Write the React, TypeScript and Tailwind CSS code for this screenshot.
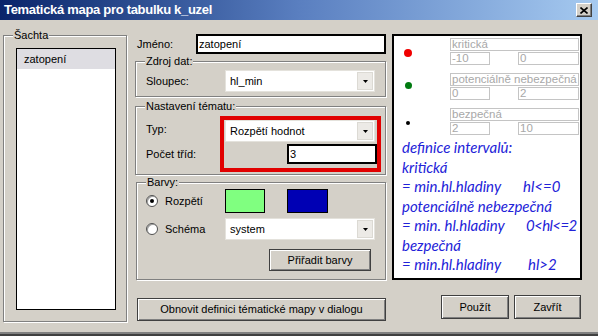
import React from "react";

const Legend = ({ children }: { children: React.ReactNode }) => (
  <span className="absolute left-[9px] top-[-7px] px-[1px] bg-[#d4d0c8] leading-[13px] whitespace-nowrap">
    {children}
  </span>
);

const Arrow = () => (
  <div className="flex h-[18px] w-[16px] mr-[1px] items-center justify-center bg-[#eceae6] border border-[#dcdad4]">
    <svg width="5" height="3" viewBox="0 0 5 3">
      <path d="M0 0h5L2.5 3z" fill="#000" />
    </svg>
  </div>
);

const Combo = ({ value }: { value: string }) => (
  <div className="flex h-[22px] w-[150px] items-center bg-white border border-[#e4e2dc]">
    <span className="flex-1 pl-[4px] leading-[13px]">{value}</span>
    <Arrow />
  </div>
);

const Radio = ({ checked }: { checked?: boolean }) => (
  <div className="flex h-[12px] w-[12px] items-center justify-center rounded-full bg-white border border-[#505050] shadow-[inset_1px_1px_0_#a0a0a0]">
    {checked && <div className="h-[4px] w-[4px] rounded-full bg-black" />}
  </div>
);

const btn =
  "flex items-center justify-center border border-[#404040] bg-[#d4d0c8] shadow-[inset_1px_1px_0_#fff,inset_-1px_-1px_0_#808080] leading-[13px]";

const group = "relative border border-[#808080] shadow-[inset_1px_1px_0_#fff,1px_1px_0_#fff]";

const DisBox = ({ text, w }: { text: string; w: string }) => (
  <div className={"h-[13px] border border-[#c4c4c4] bg-white pl-[1px] text-[#a8a8a8] text-[11.5px] leading-[11px] overflow-hidden whitespace-nowrap " + w}>
    {text}
  </div>
);

const Interval = ({
  name,
  a,
  b,
  dot,
}: {
  name: string;
  a: string;
  b: string;
  dot: React.ReactNode;
}) => (
  <div className="flex">
    <div className="w-[56px] h-[27px]">{dot}</div>
    <div className="flex flex-col w-[129px] gap-[1px]">
      <DisBox text={name} w="w-[129px]" />
      <div className="flex justify-between">
        <DisBox text={a} w="w-[40px]" />
        <DisBox text={b} w="w-[61px]" />
      </div>
    </div>
  </div>
);

export default function App() {
  return (
    <div className="w-[598px] h-[336px] bg-[#d4d0c8] flex flex-col overflow-hidden font-['Liberation_Sans',Arial,sans-serif] text-[11px] text-black">
      {/* title bar */}
      <div className="h-[20px] flex items-center justify-between bg-linear-to-r from-[#0a246a] via-[#5a7fc0] to-[#a6caf0] pl-[4px] pr-[6px]">
        <span className="text-white font-bold text-[13px] leading-[16px] tracking-[-0.3px]">
          Tematická mapa pro tabulku k_uzel
        </span>
        <div className="flex h-[14px] w-[16px] items-center justify-center bg-[#d4d0c8] border border-t-white border-l-white border-r-[#404040] border-b-[#404040] shadow-[inset_-1px_-1px_0_#808080]">
          <svg width="8" height="7" viewBox="0 0 8 7">
            <path d="M0.5 0.5L7.5 6.5M7.5 0.5L0.5 6.5" stroke="#000" strokeWidth="1.6" />
          </svg>
        </div>
      </div>

      {/* body */}
      <div className="flex flex-1 pl-[3px]">
        {/* left column */}
        <div className={group + " mt-[15px] w-[124px] h-[287px]"}>
          <Legend>Šachta</Legend>
          <div className="ml-[12px] mt-[12px] w-[100px] h-[262px] border border-black bg-white">
            <div className="h-[20px] bg-[#dedde2] pl-[7px] flex items-center leading-[13px]">zatopení</div>
          </div>
        </div>

        {/* middle column */}
        <div className="ml-[8px] w-[252px] flex flex-col">
          <div className="mt-[14px] flex items-center h-[20px]">
            <span className="w-[61px] pl-[2px] leading-[13px]">Jméno:</span>
            <div className="w-[190px] h-[20px] border-2 border-black bg-white flex items-center pl-[1px] leading-[13px]">
              zatopení
            </div>
          </div>

          <div className={group + " mt-[7px] w-[251px] h-[36px]"}>
            <Legend>Zdroj dat:</Legend>
            <div className="flex items-center pl-[10px] pt-[8px]">
              <span className="w-[79px] leading-[13px]">Sloupec:</span>
              <Combo value="hl_min" />
            </div>
          </div>

          <div className={group + " mt-[9px] w-[251px] h-[69px]"}>
            <Legend>Nastavení tématu:</Legend>
            <div className="flex pl-[10px] pt-[9px]">
              <div className="w-[74px] flex flex-col leading-[14px]">
                <span className="mt-[6px]">Typ:</span>
                <span className="mt-[11px]">Počet tříd:</span>
              </div>
              <div className="w-[161px] h-[56px] border-4 border-[#e10000] flex flex-col">
                <div className="ml-[1px]">
                  <Combo value="Rozpětí hodnot" />
                </div>
                <div className="mt-[2px] self-end w-[90px] h-[20px] border-2 border-black bg-white flex items-center pl-[1px] leading-[13px]">
                  3
                </div>
              </div>
            </div>
          </div>

          <div className={group + " mt-[7px] w-[250px] h-[98px] ml-[1px]"}>
            <Legend>Barvy:</Legend>
            <div className="flex flex-col pl-[9px] pt-[6px]">
              <div className="flex items-center h-[24px]">
                <div className="w-[79px] flex items-center">
                  <Radio checked />
                  <span className="ml-[7px] leading-[13px]">Rozpětí</span>
                </div>
                <div className="w-[40px] h-[24px] border border-black bg-[#80ff80]" />
                <div className="ml-[22px] w-[41px] h-[24px] border border-black bg-[#0000b4]" />
              </div>
              <div className="flex items-center mt-[5px] h-[22px]">
                <div className="w-[79px] flex items-center">
                  <Radio />
                  <span className="ml-[7px] leading-[13px]">Schéma</span>
                </div>
                <Combo value="system" />
              </div>
              <div className={btn + " mt-[9px] ml-[123px] w-[102px] h-[22px]"}>Přiřadit barvy</div>
            </div>
          </div>

          <div className={btn + " mt-[18px] ml-[2px] w-[249px] h-[23px]"}>
            Obnovit definici tématické mapy v dialogu
          </div>
        </div>

        {/* right column */}
        <div className="ml-[5px] w-[190px] flex flex-col">
          <div className="mt-[14px] h-[246px] border-2 border-black bg-white flex flex-col pt-[2px]">
            <div className="flex flex-col gap-[8px]">
              <Interval
                name="kritická"
                a="-10"
                b="0"
                dot={<div className="ml-[10px] mt-[11px] w-[8px] h-[8px] rounded-full bg-[#f00000]" />}
              />
              <Interval
                name="potenciálně nebezpečná"
                a="0"
                b="2"
                dot={<div className="ml-[11px] mt-[9px] w-[7px] h-[7px] rounded-full bg-[#007a10]" />}
              />
              <Interval
                name="bezpečná"
                a="2"
                b="10"
                dot={<div className="ml-[12px] mt-[13px] w-[4px] h-[4px] rounded-full bg-black" />}
              />
            </div>
            <div className="mt-[3px] pl-[8px] font-['Lato',sans-serif] italic text-[15px] leading-[19.5px] text-[#2222d8] whitespace-pre">
              <div>definice intervalů:</div>
              <div>kritická</div>
              <div className="flex">
                <span className="w-[121px]">= min.hl.hladiny</span>
                <span>hl&lt;=0</span>
              </div>
              <div>potenciálně nebezpečná</div>
              <div className="flex">
                <span className="w-[124px]">= min. hl.hladiny</span>
                <span className="tracking-[-0.6px]">0&lt;hl&lt;=2</span>
              </div>
              <div>bezpečná</div>
              <div className="flex">
                <span className="w-[126px]">= min.hl.hladiny</span>
                <span>hl&gt;2</span>
              </div>
            </div>
          </div>
          <div className="mt-[15px] flex">
            <div className={btn + " ml-[49px] w-[68px] h-[24px]"}>Použít</div>
            <div className={btn + " ml-[5px] w-[67px] h-[24px]"}>Zavřít</div>
          </div>
        </div>
      </div>

      <div className="h-[2px] bg-[#808080]" />
      <div className="h-[2px] bg-[#404040]" />
    </div>
  );
}
